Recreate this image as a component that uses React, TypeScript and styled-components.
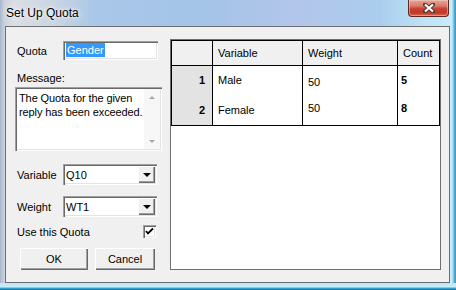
import React from 'react';
import styled, { createGlobalStyle } from 'styled-components';

const faceColor = '#f0f0f0';
const frameEdge = '#6e6e6e';

const GlobalStyle = createGlobalStyle`
  html, body {
    margin: 0;
    padding: 0;
    background: #fff;
  }
  body {
    font-family: 'Liberation Sans', Arial, sans-serif;
    font-size: 11px;
    color: #000;
  }
`;

const Window = styled.div`
  width: 456px;
  height: 290px;
  box-sizing: border-box;
  display: flex;
  flex-direction: column;
  padding: 0 6px 7px 5px;
  background:
    linear-gradient(180deg, transparent 283px, #bde8f7 283px, #c8edfa 287px, #3aaedb 288px, #1f6a93 290px),
    linear-gradient(90deg, #a7b6cc 0, #c9d1dc 4px, #dcdfe4 14px, #c6d3e2 60px, #a9c7e9 95px, #a4c4e8 200px,
      #b2c6ea 300px, #aacdee 380px, #c2e5f6 430px, #c8ecfa 452px, #3b9fcc 455px);
`;

const TitleBar = styled.div`
  height: 26px;
  flex: none;
  display: flex;
  align-items: flex-start;
  justify-content: space-between;
  padding: 0 1px;
`;

const Title = styled.span`
  font-size: 12px;
  line-height: 26px;
  color: #000;
  text-shadow: 0 0 6px #fff, 0 0 3px #fff;
`;

const CloseButton = styled.div`
  width: 41px;
  height: 17px;
  box-sizing: border-box;
  display: flex;
  align-items: center;
  justify-content: center;
  border: 1px solid #5b2a24;
  border-top: none;
  border-radius: 0 0 4px 4px;
  background: linear-gradient(180deg, #e4a497 0, #d97f70 35%, #c8402f 55%, #c23a2a 80%, #d96a4a 100%);
  box-shadow: inset 0 0 0 1px rgba(255, 220, 210, 0.45);
`;

const Client = styled.div`
  flex: 1;
  display: flex;
  align-items: stretch;
  gap: 8px;
  padding: 12px 9px 12px 9px;
  background: ${faceColor};
  border: 1px solid ${frameEdge};
`;

const Form = styled.div`
  width: 147px;
  flex: none;
  display: flex;
  flex-direction: column;
  padding-top: 2px;
`;

const Row = styled.div<{ $top?: number }>`
  display: flex;
  align-items: center;
  margin-top: ${(p) => p.$top ?? 0}px;
`;

const Label = styled.span`
  width: 46px;
  padding-left: 2px;
  flex: none;
  white-space: nowrap;
`;

const BlockLabel = styled.div<{ $top?: number }>`
  height: 14px;
  line-height: 14px;
  padding-left: 2px;
  margin-top: ${(p) => p.$top ?? 0}px;
`;

const sunken = `
  box-shadow: inset 1px 1px #a0a0a0, inset 2px 2px #696969, inset -1px -1px #ffffff, inset -2px -2px #e3e3e3;
`;

const raised = `
  box-shadow: inset 1px 1px #ffffff, inset -1px -1px #696969, inset -2px -2px #a0a0a0;
`;

const TextInput = styled.div`
  width: 95px;
  height: 19px;
  box-sizing: border-box;
  padding: 2px 0 0 3px;
  background: #fff;
  ${sunken}
`;

const Selected = styled.span`
  display: inline-block;
  height: 14px;
  line-height: 14px;
  padding: 0 1px;
  background: #3399ff;
  color: #fff;
`;

const MemoBox = styled.div<{ $top?: number }>`
  height: 64px;
  margin-top: ${(p) => p.$top ?? 0}px;
  box-sizing: border-box;
  padding: 2px;
  display: flex;
  background: #fff;
  ${sunken}
`;

const MemoText = styled.div`
  flex: 1;
  padding: 2px 0 0 2px;
  line-height: 14px;
  white-space: nowrap;
  letter-spacing: -0.1px;
`;

const ScrollTrack = styled.div`
  width: 16px;
  flex: none;
  display: flex;
  flex-direction: column;
  justify-content: space-between;
  background: #f7f7f7;
`;

const ScrollArrow = styled.div<{ $down?: boolean }>`
  height: 16px;
  display: flex;
  align-items: center;
  justify-content: center;
  &::after {
    content: '';
    border-left: 3px solid transparent;
    border-right: 3px solid transparent;
    ${(p) => (p.$down ? 'border-top: 3px solid #a7a7a7;' : 'border-bottom: 3px solid #a7a7a7;')}
  }
`;

const Combo = styled.div`
  width: 94px;
  height: 21px;
  box-sizing: border-box;
  padding: 2px;
  display: flex;
  align-items: center;
  background: #fff;
  ${sunken}
`;

const ComboText = styled.span`
  flex: 1;
  padding-left: 1px;
`;

const DropButton = styled.div`
  width: 17px;
  height: 17px;
  display: flex;
  align-items: center;
  justify-content: center;
  background: ${faceColor};
  ${raised}
  &::after {
    content: '';
    border-left: 4px solid transparent;
    border-right: 4px solid transparent;
    border-top: 4px solid #000;
    margin-top: 1px;
  }
`;

const CheckRow = styled(Row)`
  justify-content: space-between;
  padding-right: 6px;
  height: 13px;
`;

const CheckBox = styled.div`
  width: 13px;
  height: 13px;
  box-sizing: border-box;
  display: flex;
  align-items: center;
  justify-content: center;
  background: #fff;
  ${sunken}
`;

const ButtonRow = styled.div<{ $top?: number }>`
  display: flex;
  gap: 7px;
  padding-left: 5px;
  margin-top: ${(p) => p.$top ?? 0}px;
`;

const PushButton = styled.div<{ $w: number }>`
  width: ${(p) => p.$w}px;
  height: 22px;
  display: flex;
  align-items: center;
  justify-content: center;
  background: ${faceColor};
  ${raised}
`;

const GridPanel = styled.div`
  flex: 1;
  background: #fff;
  border: 1px solid ${frameEdge};
`;

const Grid = styled.table`
  width: 268px;
  border-collapse: collapse;
  table-layout: fixed;
  font-family: 'Liberation Sans', Arial, sans-serif;
  font-size: 11px;
  line-height: 13px;
`;

const HeadRow = styled.tr`
  height: 25px;
`;

const HeadCell = styled.th`
  padding: 0 0 0 5px;
  border: 1px solid #000;
  background: ${faceColor};
  font-weight: normal;
  text-align: left;
  vertical-align: middle;
`;

const BodyRow = styled.tr`
  height: 30px;
  &:last-child td {
    border-bottom: 1px solid #000;
  }
`;

const Cell = styled.td<{ $bold?: boolean; $head?: boolean; $pad?: number; $top: number }>`
  padding: ${(p) => p.$top}px ${(p) => (p.$head ? 7 : 0)}px 0 ${(p) => (p.$head ? 0 : p.$pad ?? 5)}px;
  border-left: 1px solid #000;
  border-right: 1px solid #000;
  background: ${(p) => (p.$head ? '#e3e3e3' : '#fff')};
  font-weight: ${(p) => (p.$bold || p.$head ? 'bold' : 'normal')};
  text-align: ${(p) => (p.$head ? 'right' : 'left')};
  vertical-align: top;
`;

const quotaRows = [
  { n: 1, variable: 'Male', weight: '50', count: '5', top: 8, weightTop: 10, countTop: 8 },
  { n: 2, variable: 'Female', weight: '50', count: '8', top: 8, weightTop: 6, countTop: 6 },
];

export default function App() {
  return (
    <>
      <GlobalStyle />
      <Window>
        <TitleBar>
          <Title>Set Up Quota</Title>
          <CloseButton>
            <svg width="12" height="10" viewBox="0 0 12 10">
              <path d="M2 1.5 L10 8.5 M10 1.5 L2 8.5" stroke="#4a3a38" strokeWidth="4" strokeLinecap="square" />
              <path d="M2 1.5 L10 8.5 M10 1.5 L2 8.5" stroke="#fff" strokeWidth="2.2" />
            </svg>
          </CloseButton>
        </TitleBar>
        <Client>
          <Form>
            <Row>
              <Label>Quota</Label>
              <TextInput>
                <Selected>Gender</Selected>
              </TextInput>
            </Row>
            <BlockLabel $top={11}>Message:</BlockLabel>
            <MemoBox $top={2}>
              <MemoText>
                The Quota for the given
                <br />
                reply has been exceeded.
              </MemoText>
              <ScrollTrack>
                <ScrollArrow />
                <ScrollArrow $down />
              </ScrollTrack>
            </MemoBox>
            <Row $top={13}>
              <Label>Variable</Label>
              <Combo>
                <ComboText>Q10</ComboText>
                <DropButton />
              </Combo>
            </Row>
            <Row $top={11}>
              <Label>Weight</Label>
              <Combo>
                <ComboText>WT1</ComboText>
                <DropButton />
              </Combo>
            </Row>
            <CheckRow $top={8}>
              <Label>Use this Quota</Label>
              <CheckBox>
                <svg width="9" height="9" viewBox="0 0 9 9">
                  <path d="M1 4 L3 6.5 L8 1.5" stroke="#000" strokeWidth="1.8" fill="none" />
                </svg>
              </CheckBox>
            </CheckRow>
            <ButtonRow $top={10}>
              <PushButton $w={68}>OK</PushButton>
              <PushButton $w={60}>Cancel</PushButton>
            </ButtonRow>
          </Form>
          <GridPanel>
            <Grid>
              <colgroup>
                <col style={{ width: 41 }} />
                <col style={{ width: 90 }} />
                <col style={{ width: 95 }} />
                <col style={{ width: 42 }} />
              </colgroup>
              <thead>
                <HeadRow>
                  <HeadCell />
                  <HeadCell>Variable</HeadCell>
                  <HeadCell>Weight</HeadCell>
                  <HeadCell>Count</HeadCell>
                </HeadRow>
              </thead>
              <tbody>
                {quotaRows.map((r) => (
                  <BodyRow key={r.n}>
                    <Cell $head $top={r.top}>{r.n}</Cell>
                    <Cell $top={r.top}>{r.variable}</Cell>
                    <Cell $top={r.weightTop}>{r.weight}</Cell>
                    <Cell $bold $pad={3} $top={r.countTop}>{r.count}</Cell>
                  </BodyRow>
                ))}
              </tbody>
            </Grid>
          </GridPanel>
        </Client>
      </Window>
    </>
  );
}
